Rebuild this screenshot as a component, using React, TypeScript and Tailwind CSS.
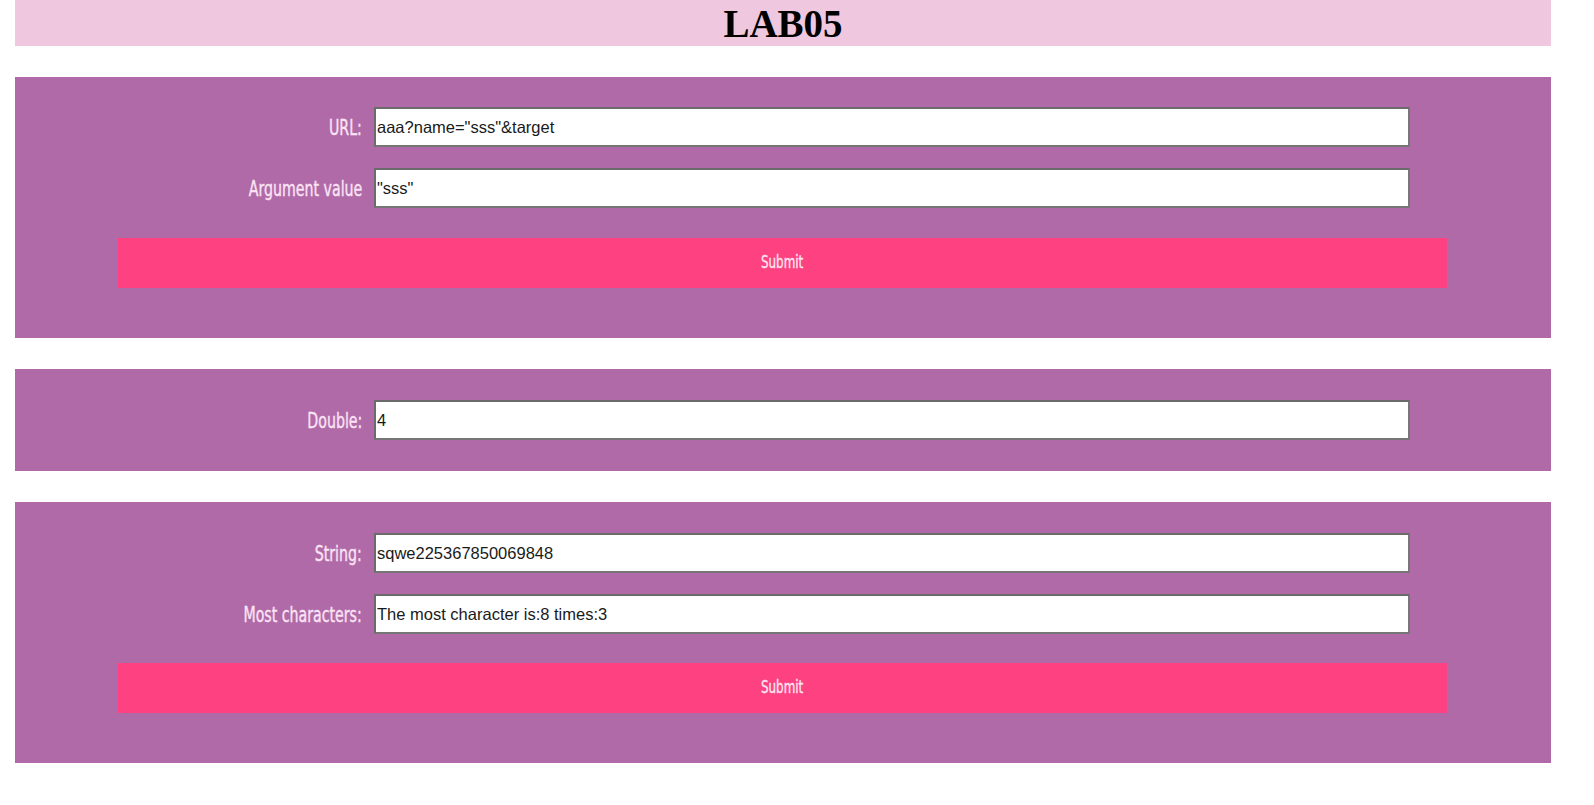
import { useState } from 'react';

const labelFont = { fontFamily: '"DejaVu Sans Condensed", "DejaVu Sans", sans-serif' };

function Field({ label, value, onChange }: { label: string; value: string; onChange?: (v: string) => void }) {
  return (
    <div className="flex items-center">
      <label className="w-[244px] pt-[4px] text-right text-[21px] text-[#fbe3f5] [-webkit-text-stroke:0.35px_#fbe3f5]" style={labelFont}>
        <span className="inline-block origin-right scale-x-[0.75] whitespace-nowrap">{label}</span>
      </label>
      <input
        value={value}
        onChange={(e) => onChange?.(e.target.value)}
        className="ml-[12px] h-[40px] w-[1036px] border-2 border-[#767676] border-t-[#6b6b6b] border-l-[#6b6b6b] bg-white px-[1px] text-[16.5px] text-[#1a1a1a] outline-none"
        style={{ fontFamily: '"Liberation Sans", Arial, sans-serif' }}
      />
    </div>
  );
}

function SubmitButton() {
  return (
    <button
      className="h-[50px] w-[1329px] bg-[#fe4180] text-[17px] text-[#fde8f3] [-webkit-text-stroke:0.3px_#fde8f3]"
      style={labelFont}
    >
      <span className="inline-block scale-x-[0.78]">Submit</span>
    </button>
  );
}

export default function App() {
  const [url, setUrl] = useState('aaa?name="sss"&target');
  const [arg, setArg] = useState('"sss"');
  const [dbl, setDbl] = useState('4');
  const [str, setStr] = useState('sqwe225367850069848');
  const [most, setMost] = useState('The most character is:8 times:3');

  return (
    <div className="min-h-[805px] w-full bg-white">
      <div className="w-[1536px] ml-[15px]">
        {/* Header */}
        <div className="flex h-[46px] items-center justify-center bg-[#efc7df]">
          <h1
            className="text-[39px] font-bold leading-none text-black"
            style={{ fontFamily: '"Liberation Serif", "Times New Roman", serif' }}
          >
            LAB05
          </h1>
        </div>

        {/* URL section */}
        <div className="mt-[31px] bg-[#b16aa8] px-[103px] pt-[30px] pb-[50px]">
          <div className="flex flex-col gap-[21px]">
            <Field label="URL:" value={url} onChange={setUrl} />
            <Field label="Argument value" value={arg} onChange={setArg} />
          </div>
          <div className="mt-[30px]">
            <SubmitButton />
          </div>
        </div>

        {/* Double section */}
        <div className="mt-[31px] bg-[#b16aa8] px-[103px] py-[31px]">
          <Field label="Double:" value={dbl} onChange={setDbl} />
        </div>

        {/* String section */}
        <div className="mt-[31px] bg-[#b16aa8] px-[103px] pt-[31px] pb-[50px]">
          <div className="flex flex-col gap-[21px]">
            <Field label="String:" value={str} onChange={setStr} />
            <Field label="Most characters:" value={most} onChange={setMost} />
          </div>
          <div className="mt-[29px]">
            <SubmitButton />
          </div>
        </div>
      </div>
    </div>
  );
}
